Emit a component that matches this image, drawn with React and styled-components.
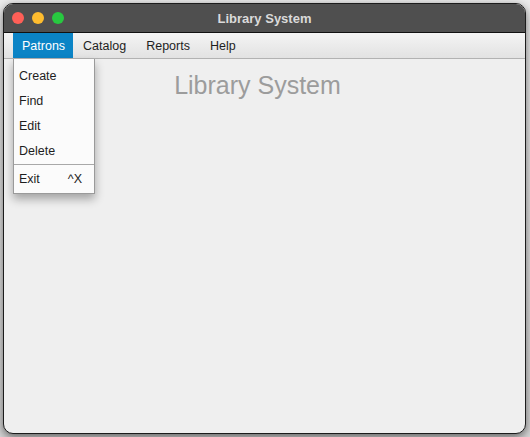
import React from "react";
import styled, { createGlobalStyle } from "styled-components";

const Global = createGlobalStyle`
  html, body { margin: 0; padding: 0; }
  body {
    width: 530px; height: 437px; overflow: hidden;
    background: linear-gradient(180deg, #ececec 0%, #d6d6d6 100%);
    font-family: "Liberation Sans", Arial, sans-serif;
  }
`;

const Window = styled.div`
  position: relative;
  margin: 3px 0 0 3px;
  width: 523px;
  height: 431px;
  box-sizing: border-box;
  border: 1px solid #1c1c1c;
  border-radius: 10px;
  overflow: hidden;
  background: #efefef;
  box-shadow: 0 3px 10px rgba(0, 0, 0, 0.55);
  display: flex;
  flex-direction: column;
`;

const TitleBar = styled.div`
  height: 28px;
  flex: none;
  background: #4f4f4f;
  border-bottom: 1px solid #111;
  display: flex;
  align-items: center;
  position: relative;
`;

const Lights = styled.div`
  display: flex;
  gap: 8px;
  padding-left: 8px;
`;

const Light = styled.span`
  width: 12px;
  height: 12px;
  border-radius: 50%;
  background: ${(p) => p.$c};
`;

const Title = styled.div`
  position: absolute;
  left: 0;
  right: 0;
  text-align: center;
  color: #dadada;
  font-weight: bold;
  font-size: 13px;
`;

const MenuBar = styled.div`
  height: 25px;
  flex: none;
  background: linear-gradient(180deg, #f4f4f4 0%, #e2e2e2 100%);
  border-bottom: 1px solid #b2b2b2;
  display: flex;
  padding-left: 9px;
`;

const MenuItem = styled.div`
  display: flex;
  align-items: center;
  padding: 0 ${(p) => (p.$active ? "8px 0 9px" : "10px")};
  font-size: 12.5px;
  color: ${(p) => (p.$active ? "#ffffff" : "#1e1e1e")};
  background: ${(p) => (p.$active ? "#0b84c6" : "transparent")};
`;

const Body = styled.div`
  flex: 1;
  position: relative;
  display: flex;
  justify-content: center;
`;

const Heading = styled.div`
  margin-top: 12px;
  margin-right: 14px;
  font-size: 25px;
  color: #9c9c9c;
`;

const Dropdown = styled.div`
  position: absolute;
  left: 9px;
  top: 0;
  width: 82px;
  box-sizing: border-box;
  background: #fbfbfb;
  border: 1px solid #9a9a9a;
  border-top: none;
  padding: 4px 0 2px;
  box-shadow: 0 5px 9px rgba(0, 0, 0, 0.32);
`;

const DropItem = styled.div`
  height: 25px;
  display: flex;
  align-items: center;
  justify-content: space-between;
  padding: 0 12px 0 5px;
  font-size: 12.5px;
  color: #1e1e1e;
`;

const Sep = styled.div`
  height: 1px;
  background: #a8a8a8;
  margin: 1px 0;
`;

export default function App() {
  return (
    <>
      <Global />
      <Window>
        <TitleBar>
          <Lights>
            <Light $c="#fe5f57" />
            <Light $c="#febc2e" />
            <Light $c="#28c840" />
          </Lights>
          <Title>Library System</Title>
        </TitleBar>
        <MenuBar>
          <MenuItem $active>Patrons</MenuItem>
          <MenuItem>Catalog</MenuItem>
          <MenuItem>Reports</MenuItem>
          <MenuItem>Help</MenuItem>
        </MenuBar>
        <Body>
          <Heading>Library System</Heading>
          <Dropdown>
            <DropItem>Create</DropItem>
            <DropItem>Find</DropItem>
            <DropItem>Edit</DropItem>
            <DropItem>Delete</DropItem>
            <Sep />
            <DropItem>
              <span>Exit</span>
              <span>^X</span>
            </DropItem>
          </Dropdown>
        </Body>
      </Window>
    </>
  );
}
